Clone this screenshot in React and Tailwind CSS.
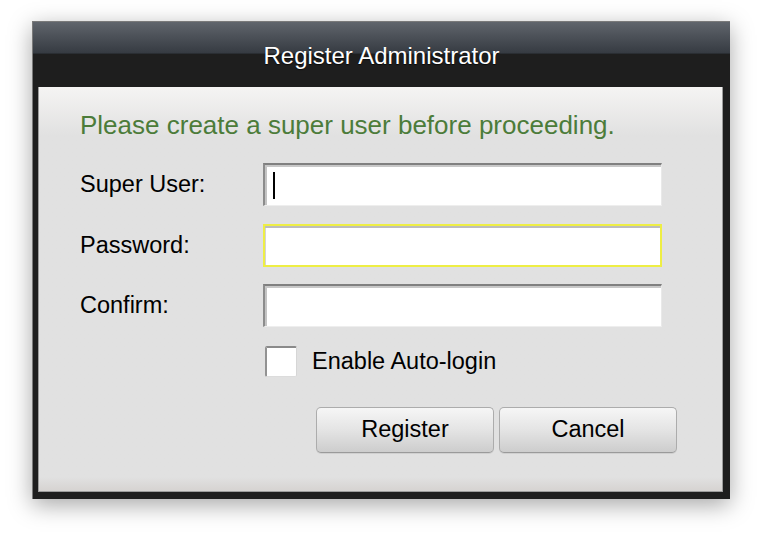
import { useState } from "react";

const font = { fontFamily: '"Liberation Sans", Arial, sans-serif' };

function Field({ label, focused, caret }) {
  return (
    <div className="flex items-center h-[43px]">
      <div className="w-[183px] text-[23.5px] text-black">{label}</div>
      <div
        className={
          focused
            ? "flex items-center w-[399px] h-full bg-white border-2 border-[#eeee44] shadow-[inset_0_2px_0_#bdbdbd,inset_1px_0_0_#d4d4d4]"
            : "flex items-center w-[399px] h-full bg-white border-t-2 border-l-2 border-r border-b border-t-[#808080] border-l-[#8c8c8c] border-r-[#e9e9e9] border-b-[#eeeeee] shadow-[inset_0_2px_0_#c8c8c8,inset_2px_0_0_#c4c4c4]"
        }
      >
        {caret && <div className="ml-[8px] w-[2px] h-[27px] bg-black" />}
      </div>
    </div>
  );
}

function Button({ children }) {
  return (
    <button className="w-[178px] h-[46px] rounded-[5px] border border-[#acacac] border-b-[#9a9a9a] bg-gradient-to-b from-[#f6f6f6] via-[#e4e4e4] to-[#cdcdcd] text-[23.5px] text-black shadow-[0_1px_0_#d0d0d0]">
      {children}
    </button>
  );
}

export default function App() {
  const [autoLogin, setAutoLogin] = useState(false);

  return (
    <div className="w-[761px] h-[537px] bg-white pl-[32px] pt-[21px]" style={font}>
      <div className="w-[698px] h-[478px] flex flex-col bg-[#1e1e1e] border-l border-t border-[#7a7a7a] shadow-[0_6px_22px_rgba(0,0,0,0.35)]">
        {/* title bar */}
        <div className="relative h-[65px] flex flex-col">
          <div className="h-[32px] bg-gradient-to-b from-[#60656c] to-[#363b42] border-b border-[#2a2e33]" />
          <div className="absolute inset-0 pt-[2px] flex items-center justify-center text-white text-[24px] [text-shadow:0_1px_1px_rgba(0,0,0,0.7)]">
            Register Administrator
          </div>
        </div>

        {/* body */}
        <div className="flex-1 pl-[5px] pr-[7px] pb-[7px] flex">
          <div className="flex-1 flex flex-col pl-[41px] pt-[23px] border-l border-r border-b border-[#9c9c9c] bg-gradient-to-b from-[#f5f4f3] via-[#e1e1e1] via-[12%] to-[#e1e1e1]">
            <div className="text-[26px] leading-[30px] text-[#4c7c3a]">
              Please create a super user before proceeding.
            </div>

            <div className="mt-[23px]">
              <Field label="Super User:" caret />
            </div>
            <div className="mt-[18px]">
              <Field label="Password:" focused />
            </div>
            <div className="mt-[17px]">
              <Field label="Confirm:" />
            </div>

            <div className="mt-[19px] ml-[185px] h-[31px] flex items-center">
              <button
                onClick={() => setAutoLogin(!autoLogin)}
                className="w-[32px] h-[31px] bg-white rounded-[2px] border-t-2 border-l-2 border-r border-b border-t-[#8a8a8a] border-l-[#929292] border-r-[#d6d6d6] border-b-[#dcdcdc]"
              >
                {autoLogin && <span className="text-[20px] leading-none">✓</span>}
              </button>
              <span className="ml-[15px] text-[23.5px] leading-[31px] text-black">Enable Auto-login</span>
            </div>

            <div className="mt-[30px] ml-[236px] flex gap-[5px]">
              <Button>Register</Button>
              <Button>Cancel</Button>
            </div>

            <div className="flex-1" />
            <div className="h-[14px] -ml-[41px] bg-gradient-to-b from-[#e1e1e1] to-[#d6d3d1]" />
          </div>
        </div>
      </div>
    </div>
  );
}
